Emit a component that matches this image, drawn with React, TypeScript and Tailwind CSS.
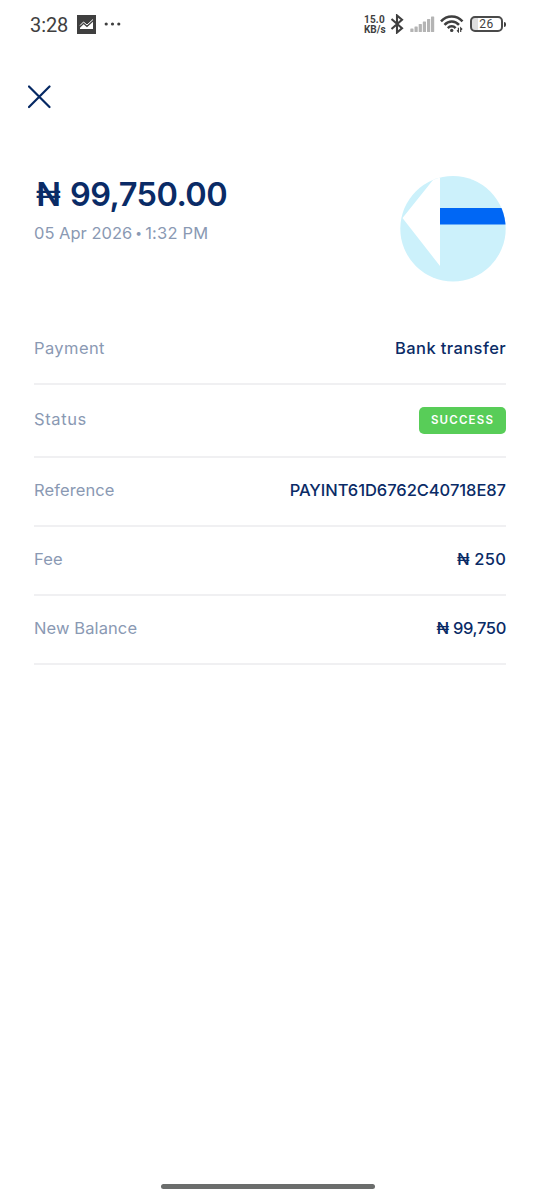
import type { ReactNode } from "react";

const StatusBar = () => (
  <div className="flex h-12 items-center justify-between pr-[34px] pl-[30px] text-[#3f3f3f]">
    <div className="flex items-center">
      <span className="relative top-px w-[47px] font-[Roboto] text-[20px] leading-6 tracking-[-0.1px]">
        3:28
      </span>
      <svg width="19" height="19" viewBox="0 0 19 19">
        <rect width="19" height="19" fill="#3f3f3f" />
        <path
          d="M3 10.5 6.5 7 10 10 16 4.5"
          fill="none"
          stroke="#fff"
          strokeWidth="1"
        />
        <path d="M3 14V12.7L6.6 9.2 10 12.2 16 6.8V14Z" fill="#fff" />
      </svg>
      <svg width="18" height="4" viewBox="0 0 18 4" className="ml-2">
        <circle cx="2.2" cy="2" r="1.6" fill="#3f3f3f" />
        <circle cx="8.5" cy="2" r="1.6" fill="#3f3f3f" />
        <circle cx="14.8" cy="2" r="1.6" fill="#3f3f3f" />
      </svg>
    </div>

    <div className="flex items-center">
      <div className="relative top-px w-[26px] font-[Roboto] text-[10px] leading-[10px] font-bold whitespace-nowrap">
        <div className="tracking-[0.2px]">15.0</div>
        <div>KB/s</div>
      </div>
      <svg width="14" height="20" viewBox="0 0 14 20">
        <path
          d="M1.5 5 12 14.2 7 18.5V1.5L12 5.8 1.5 15"
          fill="none"
          stroke="#3f3f3f"
          strokeWidth="2.1"
        />
      </svg>
      <svg width="25" height="16" viewBox="0 0 25 16" className="ml-[6px]">
        <g fill="#b4b4b4">
          <rect x="0.3" y="12.5" width="3.2" height="3.5" rx="0.6" />
          <rect x="4.5" y="10.5" width="3.2" height="5.5" rx="0.6" />
          <rect x="8.7" y="8" width="3.2" height="8" rx="0.6" />
          <rect x="12.8" y="5.5" width="3.2" height="10.5" rx="0.6" />
          <rect x="17" y="3" width="3.2" height="13" rx="0.6" />
          <rect x="21" y="0.5" width="3.2" height="15.5" rx="0.6" />
        </g>
      </svg>
      <svg width="24" height="18" viewBox="0 0 24 18" className="ml-[5px]">
        <g fill="none" stroke="#3f3f3f" strokeWidth="2.5">
          <path d="M1 6.3C7-.2 16.5-.2 22.5 6.3" />
          <path d="M4.5 9.8C8.7 5.3 14.9 5.3 19 9.8" />
          <path d="M7.8 13.1C10 10.7 13.5 10.7 15.6 13.1" />
        </g>
        <circle cx="11.7" cy="15.4" r="1.7" fill="#3f3f3f" />
        <path
          d="M18.4 12.8V16.8L17 15.4M20.7 17V13L22.2 14.5"
          fill="none"
          stroke="#3f3f3f"
          strokeWidth="1.2"
        />
      </svg>
      <div className="ml-[6px] flex items-center">
        <div className="flex h-[16px] w-[33px] items-center justify-center rounded-[5px] border-2 border-[#4a4a4a] bg-linear-to-r from-[#dedede] from-22% to-white to-22% font-[Roboto] text-[12px] leading-none tracking-[0.5px]">
          26
        </div>
        <div className="ml-px h-[5px] w-[2px] rounded-r-sm bg-[#3f3f3f]" />
      </div>
    </div>
  </div>
);

const BankLogo = () => (
  <svg width="106" height="106" viewBox="0 0 106 106">
    <defs>
      <clipPath id="logo-clip">
        <circle cx="53" cy="52.7" r="52.7" />
      </clipPath>
    </defs>
    <g clipPath="url(#logo-clip)">
      <rect width="106" height="106" fill="#ccf1fb" />
      <path d="M40 0V90L2.5 42 33 4V0Z" fill="#fff" />
      <rect x="40" y="32" width="66" height="16.5" fill="#0067f5" />
    </g>
  </svg>
);

const Row = ({
  label,
  className = "h-[69px] tracking-[0.1px]",
  children,
}: {
  label: ReactNode;
  className?: string;
  children: ReactNode;
}) => (
  <div
    className={`flex items-center justify-between border-b-2 border-[#f0f0f2] text-[16.5px] leading-6 ${className}`}
  >
    <span className="relative -top-[1.5px] font-normal text-[#8a99b3]">
      {label}
    </span>
    {children}
  </div>
);

const Value = ({
  className = "",
  children,
}: { className?: string; children: ReactNode }) => (
  <span
    className={`relative -top-[1.5px] font-medium text-[#0a2b66] ${className}`}
  >
    {children}
  </span>
);

export default function App() {
  return (
    <div className="flex h-[1200px] w-[540px] flex-col bg-white font-[Inter,sans-serif]">
      <StatusBar />

      <button type="button" className="mt-[37px] ml-[28px] size-6">
        <svg width="24" height="24" viewBox="0 0 24 24">
          <path
            d="M1 1.5 21.5 22M21.5 1.5 1 22"
            fill="none"
            stroke="#052863"
            strokeWidth="2.2"
            strokeLinecap="round"
          />
        </svg>
      </button>

      <main className="px-[34px]">
        <div className="mt-[67px] flex h-[106px] items-start justify-between">
          <div>
            <h1 className="flex h-9 items-center pt-[2px] pl-[2px] text-[32.5px] leading-9 font-semibold text-[#0a2b66]">
              <span className="w-[34px]">₦</span>
              <span className="tracking-[-0.55px]">99,750.00</span>
            </h1>
            <p className="mt-[9px] flex text-[16.5px] leading-6 text-[#8a99b3]">
              <span>05 Apr 2026</span>
              <span className="w-[13px] text-center text-[12px]">•</span>
              <span className="tracking-[0.2px]">1:32 PM</span>
            </p>
          </div>
          <BankLogo />
        </div>

        <div className="mt-[34px]">
          <Row label="Payment" className="h-[69px] tracking-[0.4px]">
            <Value>Bank transfer</Value>
          </Row>
          <Row label="Status" className="h-[73px] tracking-[0.6px]">
            <span className="flex h-[27px] w-[87px] items-center justify-center rounded-[5px] bg-[#58cd58] text-[11.5px] leading-none font-semibold tracking-[1.2px] text-white">
              SUCCESS
            </span>
          </Row>
          <Row label="Reference">
            <Value className="tracking-[-0.05px]">PAYINT61D6762C40718E87</Value>
          </Row>
          <Row label="Fee">
            <Value className="tracking-[0.2px]">₦ 250</Value>
          </Row>
          <Row label="New Balance">
            <Value className="tracking-[-0.35px]">₦ 99,750</Value>
          </Row>
        </div>
      </main>

      <div className="relative -left-[2px] mt-auto mb-[11px] h-[5px] w-[214px] self-center rounded-full bg-[#6b6d6c]" />
    </div>
  );
}
